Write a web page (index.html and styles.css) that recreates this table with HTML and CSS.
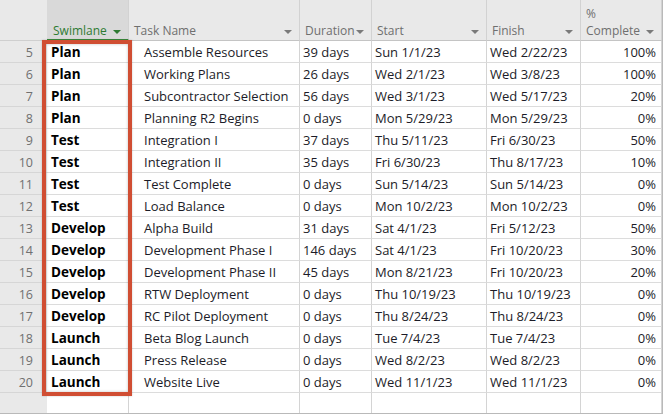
FILE: index.html
```html
<!DOCTYPE html>
<html>
<head>
<meta charset="utf-8">
<link rel="stylesheet" href="styles.css">
</head>
<body>
<div class="sheet">
  <div class="grid">
    <div class="hd rowhd"></div>
    <div class="hd sel"><span class="lbl">Swimlane</span><span class="arr"></span></div>
    <div class="hd"><span class="lbl">Task Name</span><span class="arr"></span></div>
    <div class="hd"><span class="lbl">Duration</span><span class="arr"></span></div>
    <div class="hd"><span class="lbl">Start</span><span class="arr"></span></div>
    <div class="hd"><span class="lbl">Finish</span><span class="arr"></span></div>
    <div class="hd"><span class="lbl">%<br>Complete</span><span class="arr"></span></div>
  </div>
  <div class="grid body" id="body"></div>
  <div class="hilite"></div>
</div>
<script>
var rows = [
["5","Plan","Assemble Resources","39 days","Sun 1/1/23","Wed 2/22/23","100%"],
["6","Plan","Working Plans","26 days","Wed 2/1/23","Wed 3/8/23","100%"],
["7","Plan","Subcontractor Selection","56 days","Wed 3/1/23","Wed 5/17/23","20%"],
["8","Plan","Planning R2 Begins","0 days","Mon 5/29/23","Mon 5/29/23","0%"],
["9","Test","Integration I","37 days","Thu 5/11/23","Fri 6/30/23","50%"],
["10","Test","Integration II","35 days","Fri 6/30/23","Thu 8/17/23","10%"],
["11","Test","Test Complete","0 days","Sun 5/14/23","Sun 5/14/23","0%"],
["12","Test","Load Balance","0 days","Mon 10/2/23","Mon 10/2/23","0%"],
["13","Develop","Alpha Build","31 days","Sat 4/1/23","Fri 5/12/23","50%"],
["14","Develop","Development Phase I","146 days","Sat 4/1/23","Fri 10/20/23","30%"],
["15","Develop","Development Phase II","45 days","Mon 8/21/23","Fri 10/20/23","20%"],
["16","Develop","RTW Deployment","0 days","Thu 10/19/23","Thu 10/19/23","0%"],
["17","Develop","RC Pilot Deployment","0 days","Thu 8/24/23","Thu 8/24/23","0%"],
["18","Launch","Beta Blog Launch","0 days","Tue 7/4/23","Tue 7/4/23","0%"],
["19","Launch","Press Release","0 days","Wed 8/2/23","Wed 8/2/23","0%"],
["20","Launch","Website Live","0 days","Wed 11/1/23","Wed 11/1/23","0%"],
["","","","","","",""]
];
var cls = ["c rn","c lane","c task","c dur","c date","c date","c pct"];
var html = "";
rows.forEach(function(r){
  r.forEach(function(v,i){ html += '<div class="'+cls[i]+'">'+v+'</div>'; });
});
document.getElementById("body").innerHTML = html;
</script>
</body>
</html>
```
FILE: styles.css
```css
html, body { margin: 0; padding: 0; background: #fff; }
body {
  font-family: "Open Sans", "Noto Sans", sans-serif;
  font-size: 13px;
  color: #1c1c28;
}
.sheet {
  position: relative;
  width: 662px;
  height: 413px;
  border-right: 1px solid #b9b9b9;
  border-bottom: 1px solid #b9b9b9;
  overflow: hidden;
}
.grid {
  display: grid;
  grid-template-columns: 47px 82px 171px 72px 115px 94px 81px;
}
.hd {
  box-sizing: border-box;
  height: 41px;
  background: #e9e9e9;
  border-right: 1px solid #d2d2d2;
  border-bottom: 1px solid #c4c4c4;
  display: flex;
  align-items: flex-end;
  justify-content: space-between;
  padding: 0 7px 1px 5px;
  font-size: 12px;
  color: #6f6f6f;
  line-height: 17px;
}
.hd.rowhd { padding: 0; border-right: none; border-bottom: 1px solid #cfcfcf; }
.hd.sel {
  background: #d9d9d9;
  color: #2e7b32;
  border-bottom: 2px solid #3a8a3a;
  padding-left: 6px;
  padding-bottom: 0;
}
.hd .arr {
  width: 0; height: 0;
  border-left: 4px solid transparent;
  border-right: 4px solid transparent;
  border-top: 4px solid #7a7a7a;
  margin-bottom: 5px;
  flex: none;
}
.hd.sel .arr { border-top-color: #2e7b32; }
.c {
  height: 22px;
  box-sizing: border-box;
  border-right: 1px solid #d4d4d4;
  border-bottom: 1px solid #dcdcdc;
  line-height: 23px;
  white-space: nowrap;
  overflow: hidden;
  padding: 0 3px;
}
.c.rn {
  background: #e9e9e9;
  color: #707070;
  text-align: right;
  padding-right: 14px;
  border-right: none;
  border-bottom-color: #d6d6d6;
  font-size: 12.5px;
}
.c.lane {
  font-weight: 700;
  color: #000;
  font-size: 13.5px;
  padding-left: 4px;
}
.c.task { padding-left: 15px; }
.c.date { padding-left: 3px; }
.c.pct { text-align: right; padding-right: 5px; }
.hilite {
  position: absolute;
  left: 42px;
  top: 40px;
  width: 90px;
  height: 356px;
  box-sizing: border-box;
  border: 4px solid #d04e33;
  box-shadow: inset 0 0 3px rgba(0,0,0,0.25), 0 0 2px rgba(0,0,0,0.2);
  pointer-events: none;
}
```
